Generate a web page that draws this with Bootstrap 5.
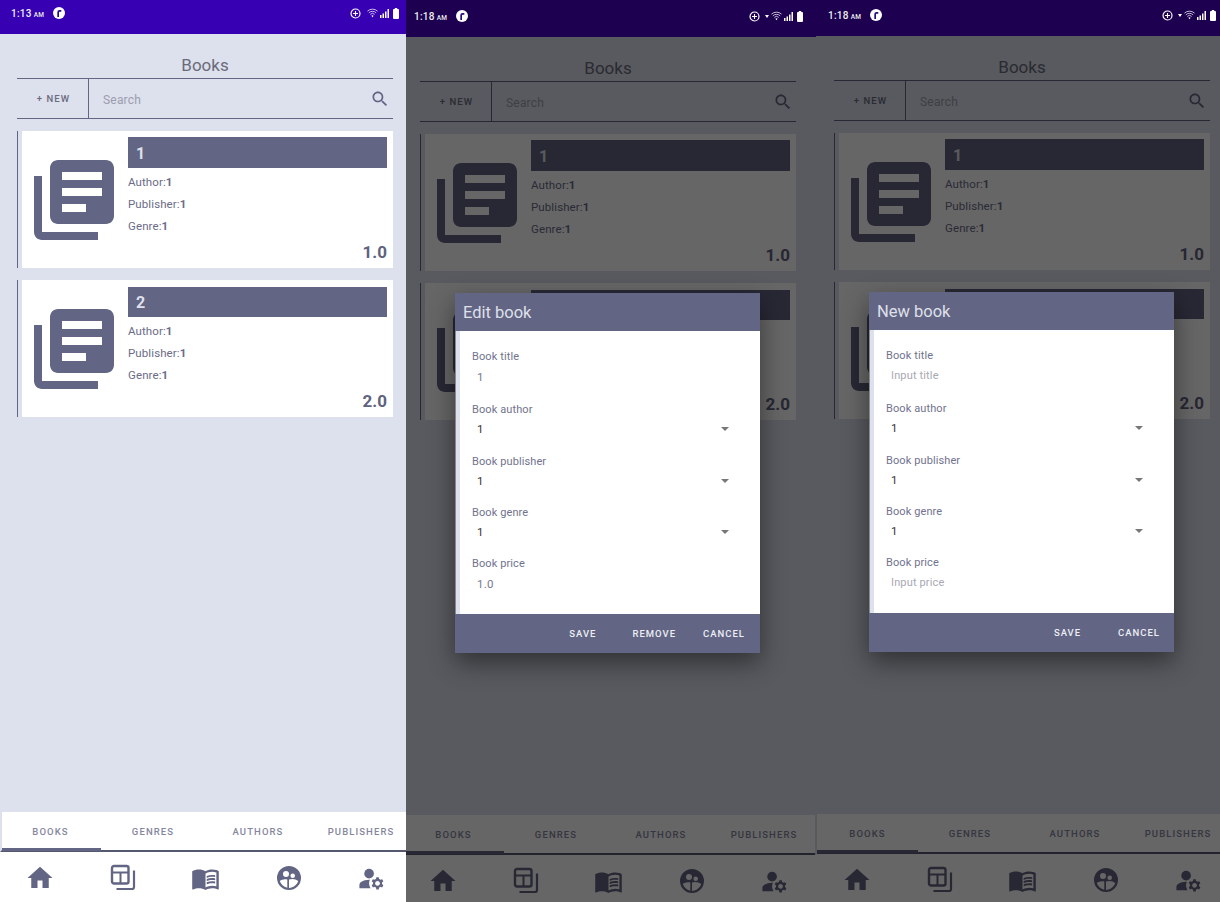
<!DOCTYPE html>
<html lang="en">
<head>
<meta charset="utf-8">
<title>Books</title>
<link href="https://cdn.jsdelivr.net/npm/bootstrap@5.3.0/dist/css/bootstrap.min.css" rel="stylesheet">
<style>
:root{--ink:#626583;--pale:#dde0ed}
html,body{margin:0;height:902px;overflow:hidden;background:#5a5b60}
body{font-family:Roboto,"Liberation Sans",sans-serif;color:var(--ink)}
.phone{height:902px;flex:none;background:var(--pale)}
.phone-a{width:406px;--sb:34px;--cx:17px;--nav:50px;--tx:0px;--sbc:#3700b3}
.phone-b{width:410px;--sb:37px;--cx:14px;--nav:47px;--tx:-3px;--sbc:#1d004f}
.phone-c{width:404px;--sb:36px;--cx:18px;--nav:48px;--tx:1px;--sbc:#1d004f}
.sbar{height:var(--sb);background:var(--sbc);color:#eee;flex:none;padding:0 7px 8px 11px}
.phone-b .sbar{padding:0 13px 5px 8px}
.phone-c .sbar{padding:0 4px 6px 12px}
.clock{font-size:10px;line-height:1;font-weight:500;letter-spacing:.25px;padding-top:1px}
.clock small{font-size:6.5px;margin-left:2px;font-weight:500}
.sico{display:block;flex:none}
.sico-p{margin-left:9px}
.gap-al{margin-right:6px}
.gap-wf{margin-right:2px}
.gap-sg{margin-right:4px}
.phone-b .gap-al,.phone-c .gap-al{margin-right:5px}
.tri{width:0;height:0;border-left:2px solid transparent;border-right:2px solid transparent;border-top:3px solid #fff;margin-right:2px}
.main{padding:21px 0 0 var(--cx);width:calc(var(--cx) + 376px);flex:1 1 auto;min-height:0}
.heading{font-size:17px;line-height:21px;height:23px;text-align:center;color:#6a6b7a}
.toolbar{height:41px;border-top:1px solid var(--ink);border-bottom:1px solid var(--ink)}
.new-btn{width:72px;border:0;border-right:1px solid var(--ink);border-radius:0;padding:2px 0 0 2px;font-size:9.5px;font-weight:500;letter-spacing:1.1px;color:#6a6b7f;background:transparent}
.search-ph{font-size:12px;color:#9c9eae;padding:3px 0 0 14px;letter-spacing:.2px}
.search-ic{width:20px;height:20px;fill:#626583;margin-right:3px}
.book{height:137px;margin-top:12px;border-left:1px solid var(--ink);padding-left:4px}
.book-in{background:#fff;height:137px;padding:6px 6px 0 0}
.book+.book .book-in{padding-top:7px}
.book+.book .book-title{height:30px;line-height:32px}
.book+.book .cover{margin-top:14px}
.cover{width:96px;height:96px;fill:var(--ink);margin:15px 6px 0 4px;flex:none}
.book-title{height:31px;background:var(--ink);color:#dfe0ea;font-size:16px;font-weight:700;line-height:33px;padding-left:8px}
.meta{font-size:11.5px;line-height:22px;height:22px;color:#6a6c88;letter-spacing:.1px}
.meta-first{margin-top:3px}
.meta b{font-weight:700}
.cost{font-size:17px;font-weight:700;line-height:20px;text-align:right;margin-top:5px;color:#5f6280}
.tabs{height:40px;width:412px;margin-left:var(--tx);flex:none;background:#fff;border-bottom:2px solid #55586f}
.phone-a .tabs{border-left:2px solid var(--pale)}
.tab-i{font-size:9.5px;font-weight:500;letter-spacing:1.1px;color:#85879e;line-height:39px;text-align:center;flex:none;height:39px}
.tab-1{width:101px;border-bottom:3px solid var(--ink)}
.phone-a .tab-1{width:99px}
.phone-a .tab-i.tab-1{padding-right:2px}
.tab-2{width:104px}.tab-3{width:106px}.tab-4{width:100px}
.botnav{height:var(--nav);flex:none;background:#fff;width:415px;margin-left:calc(var(--tx) - 2px);padding-top:11px}
.slot{width:83px;height:30px;flex:none}
.slot svg{fill:var(--ink);display:block}
.scrim{top:var(--sb);left:0;right:0;bottom:0;background:rgba(0,0,0,.6)}
.sheet{width:305px;box-shadow:0 10px 24px rgba(0,0,0,.45)}
.phone-b .sheet{left:49px;top:293px}
.phone-c .sheet{left:53px;top:292px}
.sheet-h{height:38px;background:var(--ink);color:#dfe0ea;font-size:16.5px;line-height:40px;padding-left:8px}
.sheet-b{background:#fff;height:283px;border-left:1px solid #8a8a8a;padding:19px 0 0 16px;position:relative}
.sheet-b::before{content:"";position:absolute;left:0;top:0;bottom:0;width:4px;background:var(--pale)}
.fld-l{font-size:11px;line-height:14px;height:14px;color:#71738e;letter-spacing:.1px}
.fld-v{font-size:11.5px;line-height:14px;height:14px;padding-left:5px;margin-top:6px;color:#767890;letter-spacing:.3px}
.fld-v.ph{color:#a8a9b3;font-size:11px;letter-spacing:.15px}
.fld-s{font-size:11.5px;line-height:14px;height:14px;padding-left:5px;margin-top:5px;color:#333;width:257px}
.fld{height:51px}
.fld-tall{height:53px}
.fld-mid{height:52px}
.caret-d{width:0;height:0;border-left:4.5px solid transparent;border-right:4.5px solid transparent;border-top:4.5px solid #777}
.sheet-f{height:39px;background:var(--ink);padding-right:15px;gap:27px}
.phone-c .sheet-f{padding-right:14px}
.act{border:0;padding:0;font-size:9.5px;font-weight:500;letter-spacing:1px;color:#eceef5;background:transparent;line-height:38px;border-radius:0}
.act-rm{margin-left:9px}
.act-cn{margin-left:10px}
</style>
</head>
<body>
<svg width="0" height="0" class="position-absolute">
<defs>
<symbol id="i-search" viewBox="0 0 24 24"><path d="M15.5 14h-.79l-.28-.27C15.41 12.59 16 11.11 16 9.5 16 5.91 13.09 3 9.5 3S3 5.91 3 9.5 5.91 16 9.5 16c1.61 0 3.09-.59 4.23-1.57l.27.28v.79l5 4.99L20.49 19l-4.99-5zm-6 0C7.01 14 5 11.99 5 9.5S7.01 5 9.5 5 14 7.01 14 9.5 11.99 14 9.5 14z"/></symbol>
<symbol id="i-lib" viewBox="0 0 24 24"><path d="M4 6H2v14c0 1.1.9 2 2 2h14v-2H4V6zm16-4H8c-1.1 0-2 .9-2 2v12c0 1.1.9 2 2 2h12c1.1 0 2-.9 2-2V4c0-1.1-.9-2-2-2zm-1 9H9V9h10v2zm-4 4H9v-2h6v2zm4-8H9V5h10v2z"/></symbol>
<symbol id="i-home" viewBox="0 0 24 24"><path d="M10 20v-6h4v6h5v-8h3L12 3 2 12h3v8z"/></symbol>
<symbol id="i-dash" viewBox="0 0 30 30"><g fill="none" stroke="#626583"><rect x="4" y="3" width="16.500" height="17.500" rx="2" stroke-width="2.400"/><path d="M4 9.500h16.500M12.500 9.500v11" stroke-width="2"/><path d="M26 7.500v16.500a2 2 0 0 1-2 2H8.500" stroke-width="2.200"/></g></symbol>
<symbol id="i-book" viewBox="0 0 24 24"><path d="M21 5c-1.11-.35-2.33-.5-3.5-.5-1.95 0-4.050.4-5.500 1.500-1.450-1.100-3.550-1.500-5.500-1.500S2.450 4.900 1 6v14.650c0 .25.25.5.5.5.1 0 .15-.05.25-.05C3.100 20.450 5.050 20 6.500 20c1.950 0 4.050.4 5.500 1.500 1.350-.85 3.800-1.500 5.500-1.500 1.650 0 3.350.3 4.750 1.050.1.05.15.05.25.05.25 0 .5-.25.5-.5V6c-.6-.45-1.250-.75-2-1zm0 13.500c-1.100-.35-2.300-.5-3.500-.5-1.700 0-4.150.65-5.500 1.500V8c1.350-.85 3.800-1.500 5.500-1.500 1.200 0 2.400.15 3.500.5v11.500z"/><path d="M17.500 10.500c.88 0 1.730.09 2.500.26V9.240c-.79-.15-1.640-.24-2.500-.24-1.700 0-3.240.29-4.500.83v1.660c1.130-.64 2.700-.99 4.500-.99zM13 12.490v1.660c1.130-.64 2.700-.99 4.500-.99.88 0 1.730.09 2.500.26V11.900c-.79-.15-1.640-.24-2.500-.24-1.700 0-3.240.3-4.500.83zM17.500 14.330c-1.700 0-3.240.29-4.500.83v1.660c1.130-.64 2.700-.99 4.500-.99.88 0 1.730.09 2.500.26v-1.520c-.79-.16-1.640-.24-2.500-.24z"/></symbol>
<symbol id="i-fam" viewBox="0 0 24 24"><path fill-rule="evenodd" d="M12 0a12 12 0 1 1 0 24a12 12 0 0 1 0-24zM9 5a3 3 0 1 0 0 6a3 3 0 0 0 0-6zM15.700 7.400a2.300 2.300 0 1 0 0 4.600a2.300 2.300 0 0 0 0-4.600zM2.800 15c1 3.300 3.800 6 7.500 6.800v-8.300c-2.700-.8-5.500-.1-7.500 1.500zM12 13.600v8.300c4.500-.2 8-3 9.200-6.900-2.400-2-6-2.800-9.200-1.400z"/></symbol>
<symbol id="i-mgr" viewBox="0 0 24 24"><circle cx="10" cy="8" r="4"/><path d="M10.670 13.020C10.450 13.010 10.230 13 10 13c-2.420 0-4.680.67-6.610 1.820C2.510 15.340 2 16.320 2 17.350V20h9.260c-.79-1.130-1.260-2.510-1.260-4 0-1.070.25-2.070.67-2.980z"/><path d="M20.750 16c0-.22-.03-.42-.06-.63l1.140-1.010-1-1.730-1.450.49c-.32-.27-.68-.48-1.080-.63L18 11h-2l-.3 1.490c-.4.15-.76.36-1.080.63l-1.450-.49-1 1.730 1.140 1.010c-.03.21-.06.41-.06.63s.03.42.06.63l-1.140 1.010 1 1.730 1.450-.49c.32.27.68.48 1.080.63L16 21h2l.3-1.490c.4-.15.76-.36 1.080-.63l1.450.49 1-1.730-1.140-1.010c.03-.21.06-.41.06-.63zM17 18c-1.100 0-2-.9-2-2s.9-2 2-2 2 .9 2 2-.9 2-2 2z"/></symbol>
<symbol id="s-p" viewBox="0 0 12 12"><circle cx="6" cy="6" r="6" fill="#fff"/><path d="M4.300 10V5.200A2.200 2.200 0 0 1 6.500 3h1.800v1.800H6.700a.7.700 0 0 0-.7.700V10z" fill="#2a0a80"/></symbol>
<symbol id="s-alarm" viewBox="0 0 12 12"><circle cx="6" cy="6" r="4.900" fill="none" stroke="#fff" stroke-width="1.300"/><path d="M5.400 3.300h1.200v2.100h2.100v1.200h-2.100v2.100H5.400V6.600H3.300V5.400h2.100z" fill="#fff"/></symbol>
<symbol id="s-wifi" viewBox="0 0 12 10"><g fill="none" stroke="#fff" stroke-width=".8"><path d="M.5 3A8 8 0 0 1 11.500 3"/><path d="M2 4.800A5.800 5.800 0 0 1 10 4.800"/><path d="M3.600 6.500A3.400 3.400 0 0 1 8.400 6.500"/></g><path d="M4.800 8L6 9.500 7.200 8A1.800 1.800 0 0 0 4.800 8z" fill="#fff"/></symbol>
<symbol id="s-sig" viewBox="0 0 9 9"><path d="M0 6h1.500v3H0zM2.500 4.500H4V9H2.500zM5 2.500h1.500V9H5zM7.500 0H9v9H7.500z" fill="#fff"/></symbol>
<symbol id="s-bat" viewBox="0 0 6 11"><path d="M1.800 0h2.400v1h.8a1 1 0 0 1 1 1v8a1 1 0 0 1-1 1H1a1 1 0 0 1-1-1V2a1 1 0 0 1 1-1h.8z" fill="#fff"/></symbol>
</defs>
</svg>

<div class="d-flex">

<!-- Phone A -->
<section class="phone phone-a d-flex flex-column position-relative overflow-hidden">
  <div class="sbar d-flex align-items-center">
    <span class="clock">1:13<small>AM</small></span>
    <svg class="sico sico-p" width="12" height="12"><use href="#s-p"/></svg>
    <div class="d-flex align-items-center ms-auto">
      <svg class="sico gap-al" width="11" height="11"><use href="#s-alarm"/></svg>
      <svg class="sico gap-wf" width="11" height="10"><use href="#s-wifi"/></svg>
      <svg class="sico gap-sg" width="9" height="9"><use href="#s-sig"/></svg>
      <svg class="sico" width="6" height="11"><use href="#s-bat"/></svg>
    </div>
  </div>
  <div class="main">
    <div class="heading">Books</div>
    <div class="toolbar d-flex align-items-stretch">
      <button class="btn new-btn" type="button">+ NEW</button>
      <div class="search-ph flex-grow-1 d-flex align-items-center">Search</div>
      <div class="d-flex align-items-center"><svg class="search-ic"><use href="#i-search"/></svg></div>
    </div>
    <div class="book">
      <div class="book-in d-flex">
        <svg class="cover"><use href="#i-lib"/></svg>
        <div class="flex-grow-1">
          <div class="book-title">1</div>
          <div class="meta meta-first">Author:<b>1</b></div>
          <div class="meta">Publisher:<b>1</b></div>
          <div class="meta">Genre:<b>1</b></div>
          <div class="cost">1.0</div>
        </div>
      </div>
    </div>
    <div class="book">
      <div class="book-in d-flex">
        <svg class="cover"><use href="#i-lib"/></svg>
        <div class="flex-grow-1">
          <div class="book-title">2</div>
          <div class="meta meta-first">Author:<b>1</b></div>
          <div class="meta">Publisher:<b>1</b></div>
          <div class="meta">Genre:<b>1</b></div>
          <div class="cost">2.0</div>
        </div>
      </div>
    </div>
  </div>
  <div class="tabs d-flex">
    <div class="tab-i tab-1">BOOKS</div><div class="tab-i tab-2">GENRES</div><div class="tab-i tab-3">AUTHORS</div><div class="tab-i tab-4">PUBLISHERS</div>
  </div>
  <div class="botnav d-flex">
    <div class="slot d-flex justify-content-center align-items-center"><svg width="30" height="30"><use href="#i-home"/></svg></div>
    <div class="slot d-flex justify-content-center align-items-center"><svg width="30" height="30"><use href="#i-dash"/></svg></div>
    <div class="slot d-flex justify-content-center align-items-center"><svg width="29" height="29"><use href="#i-book"/></svg></div>
    <div class="slot d-flex justify-content-center align-items-center"><svg width="24" height="24"><use href="#i-fam"/></svg></div>
    <div class="slot d-flex justify-content-center align-items-center"><svg width="29" height="29"><use href="#i-mgr"/></svg></div>
  </div>
</section>

<!-- Phone B -->
<section class="phone phone-b d-flex flex-column position-relative overflow-hidden">
  <div class="sbar d-flex align-items-center">
    <span class="clock">1:18<small>AM</small></span>
    <svg class="sico sico-p" width="12" height="12"><use href="#s-p"/></svg>
    <div class="d-flex align-items-center ms-auto">
      <svg class="sico gap-al" width="11" height="11"><use href="#s-alarm"/></svg>
      <span class="tri"></span>
      <svg class="sico gap-wf" width="11" height="10"><use href="#s-wifi"/></svg>
      <svg class="sico gap-sg" width="9" height="9"><use href="#s-sig"/></svg>
      <svg class="sico" width="6" height="11"><use href="#s-bat"/></svg>
    </div>
  </div>
  <div class="main">
    <div class="heading">Books</div>
    <div class="toolbar d-flex align-items-stretch">
      <button class="btn new-btn" type="button">+ NEW</button>
      <div class="search-ph flex-grow-1 d-flex align-items-center">Search</div>
      <div class="d-flex align-items-center"><svg class="search-ic"><use href="#i-search"/></svg></div>
    </div>
    <div class="book">
      <div class="book-in d-flex">
        <svg class="cover"><use href="#i-lib"/></svg>
        <div class="flex-grow-1">
          <div class="book-title">1</div>
          <div class="meta meta-first">Author:<b>1</b></div>
          <div class="meta">Publisher:<b>1</b></div>
          <div class="meta">Genre:<b>1</b></div>
          <div class="cost">1.0</div>
        </div>
      </div>
    </div>
    <div class="book">
      <div class="book-in d-flex">
        <svg class="cover"><use href="#i-lib"/></svg>
        <div class="flex-grow-1">
          <div class="book-title">2</div>
          <div class="meta meta-first">Author:<b>1</b></div>
          <div class="meta">Publisher:<b>1</b></div>
          <div class="meta">Genre:<b>1</b></div>
          <div class="cost">2.0</div>
        </div>
      </div>
    </div>
  </div>
  <div class="tabs d-flex">
    <div class="tab-i tab-1">BOOKS</div><div class="tab-i tab-2">GENRES</div><div class="tab-i tab-3">AUTHORS</div><div class="tab-i tab-4">PUBLISHERS</div>
  </div>
  <div class="botnav d-flex">
    <div class="slot d-flex justify-content-center align-items-center"><svg width="30" height="30"><use href="#i-home"/></svg></div>
    <div class="slot d-flex justify-content-center align-items-center"><svg width="30" height="30"><use href="#i-dash"/></svg></div>
    <div class="slot d-flex justify-content-center align-items-center"><svg width="29" height="29"><use href="#i-book"/></svg></div>
    <div class="slot d-flex justify-content-center align-items-center"><svg width="24" height="24"><use href="#i-fam"/></svg></div>
    <div class="slot d-flex justify-content-center align-items-center"><svg width="29" height="29"><use href="#i-mgr"/></svg></div>
  </div>
  <div class="scrim position-absolute"></div>
  <div class="sheet position-absolute">
    <div class="sheet-h">Edit book</div>
    <div class="sheet-b">
      <div class="fld-tall"><div class="fld-l">Book title</div><div class="fld-v">1</div></div>
      <div class="fld-mid"><div class="fld-l">Book author</div><div class="fld-s d-flex justify-content-between align-items-center"><span>1</span><span class="caret-d"></span></div></div>
      <div class="fld"><div class="fld-l">Book publisher</div><div class="fld-s d-flex justify-content-between align-items-center"><span>1</span><span class="caret-d"></span></div></div>
      <div class="fld"><div class="fld-l">Book genre</div><div class="fld-s d-flex justify-content-between align-items-center"><span>1</span><span class="caret-d"></span></div></div>
      <div class="fld"><div class="fld-l">Book price</div><div class="fld-v">1.0</div></div>
    </div>
    <div class="sheet-f d-flex justify-content-end">
      <button class="btn act" type="button">SAVE</button>
      <button class="btn act act-rm" type="button">REMOVE</button>
      <button class="btn act" type="button">CANCEL</button>
    </div>
  </div>
</section>

<!-- Phone C -->
<section class="phone phone-c d-flex flex-column position-relative overflow-hidden">
  <div class="sbar d-flex align-items-center">
    <span class="clock">1:18<small>AM</small></span>
    <svg class="sico sico-p" width="12" height="12"><use href="#s-p"/></svg>
    <div class="d-flex align-items-center ms-auto">
      <svg class="sico gap-al" width="11" height="11"><use href="#s-alarm"/></svg>
      <span class="tri"></span>
      <svg class="sico gap-wf" width="11" height="10"><use href="#s-wifi"/></svg>
      <svg class="sico gap-sg" width="9" height="9"><use href="#s-sig"/></svg>
      <svg class="sico" width="6" height="11"><use href="#s-bat"/></svg>
    </div>
  </div>
  <div class="main">
    <div class="heading">Books</div>
    <div class="toolbar d-flex align-items-stretch">
      <button class="btn new-btn" type="button">+ NEW</button>
      <div class="search-ph flex-grow-1 d-flex align-items-center">Search</div>
      <div class="d-flex align-items-center"><svg class="search-ic"><use href="#i-search"/></svg></div>
    </div>
    <div class="book">
      <div class="book-in d-flex">
        <svg class="cover"><use href="#i-lib"/></svg>
        <div class="flex-grow-1">
          <div class="book-title">1</div>
          <div class="meta meta-first">Author:<b>1</b></div>
          <div class="meta">Publisher:<b>1</b></div>
          <div class="meta">Genre:<b>1</b></div>
          <div class="cost">1.0</div>
        </div>
      </div>
    </div>
    <div class="book">
      <div class="book-in d-flex">
        <svg class="cover"><use href="#i-lib"/></svg>
        <div class="flex-grow-1">
          <div class="book-title">2</div>
          <div class="meta meta-first">Author:<b>1</b></div>
          <div class="meta">Publisher:<b>1</b></div>
          <div class="meta">Genre:<b>1</b></div>
          <div class="cost">2.0</div>
        </div>
      </div>
    </div>
  </div>
  <div class="tabs d-flex">
    <div class="tab-i tab-1">BOOKS</div><div class="tab-i tab-2">GENRES</div><div class="tab-i tab-3">AUTHORS</div><div class="tab-i tab-4">PUBLISHERS</div>
  </div>
  <div class="botnav d-flex">
    <div class="slot d-flex justify-content-center align-items-center"><svg width="30" height="30"><use href="#i-home"/></svg></div>
    <div class="slot d-flex justify-content-center align-items-center"><svg width="30" height="30"><use href="#i-dash"/></svg></div>
    <div class="slot d-flex justify-content-center align-items-center"><svg width="29" height="29"><use href="#i-book"/></svg></div>
    <div class="slot d-flex justify-content-center align-items-center"><svg width="24" height="24"><use href="#i-fam"/></svg></div>
    <div class="slot d-flex justify-content-center align-items-center"><svg width="29" height="29"><use href="#i-mgr"/></svg></div>
  </div>
  <div class="scrim position-absolute"></div>
  <div class="sheet position-absolute">
    <div class="sheet-h">New book</div>
    <div class="sheet-b">
      <div class="fld-tall"><div class="fld-l">Book title</div><div class="fld-v ph">Input title</div></div>
      <div class="fld-mid"><div class="fld-l">Book author</div><div class="fld-s d-flex justify-content-between align-items-center"><span>1</span><span class="caret-d"></span></div></div>
      <div class="fld"><div class="fld-l">Book publisher</div><div class="fld-s d-flex justify-content-between align-items-center"><span>1</span><span class="caret-d"></span></div></div>
      <div class="fld"><div class="fld-l">Book genre</div><div class="fld-s d-flex justify-content-between align-items-center"><span>1</span><span class="caret-d"></span></div></div>
      <div class="fld"><div class="fld-l">Book price</div><div class="fld-v ph">Input price</div></div>
    </div>
    <div class="sheet-f d-flex justify-content-end">
      <button class="btn act" type="button">SAVE</button>
      <button class="btn act act-cn" type="button">CANCEL</button>
    </div>
  </div>
</section>

</div>
<script src="https://cdn.jsdelivr.net/npm/bootstrap@5.3.0/dist/js/bootstrap.bundle.min.js"></script>
</body>
</html>
